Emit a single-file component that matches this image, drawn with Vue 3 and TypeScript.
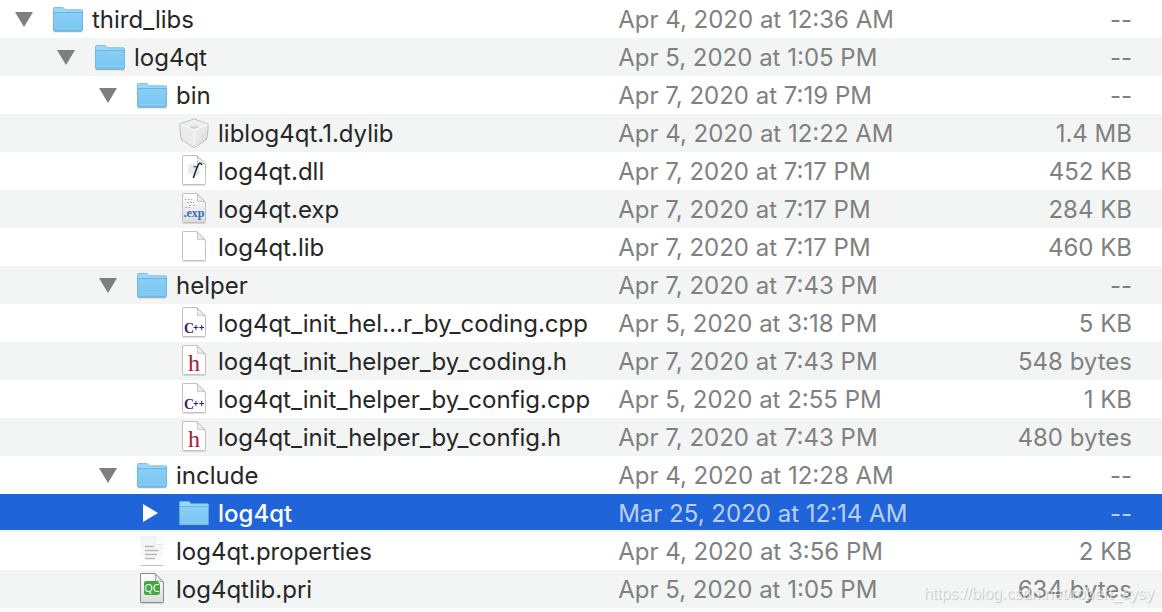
<script setup lang="ts">
import { ref } from 'vue'

type Kind = 'folder' | 'dylib' | 'dll' | 'exp' | 'blank' | 'cpp' | 'header' | 'text' | 'pri'

interface Entry {
  name: string
  kind: Kind
  depth: number
  modified: string
  size: string
  open?: boolean
}

const entries: Entry[] = [
  { name: 'third_libs', kind: 'folder', depth: 0, modified: 'Apr 4, 2020 at 12:36 AM', size: '--', open: true },
  { name: 'log4qt', kind: 'folder', depth: 1, modified: 'Apr 5, 2020 at 1:05 PM', size: '--', open: true },
  { name: 'bin', kind: 'folder', depth: 2, modified: 'Apr 7, 2020 at 7:19 PM', size: '--', open: true },
  { name: 'liblog4qt.1.dylib', kind: 'dylib', depth: 3, modified: 'Apr 4, 2020 at 12:22 AM', size: '1.4 MB' },
  { name: 'log4qt.dll', kind: 'dll', depth: 3, modified: 'Apr 7, 2020 at 7:17 PM', size: '452 KB' },
  { name: 'log4qt.exp', kind: 'exp', depth: 3, modified: 'Apr 7, 2020 at 7:17 PM', size: '284 KB' },
  { name: 'log4qt.lib', kind: 'blank', depth: 3, modified: 'Apr 7, 2020 at 7:17 PM', size: '460 KB' },
  { name: 'helper', kind: 'folder', depth: 2, modified: 'Apr 7, 2020 at 7:43 PM', size: '--', open: true },
  { name: 'log4qt_init_hel…r_by_coding.cpp', kind: 'cpp', depth: 3, modified: 'Apr 5, 2020 at 3:18 PM', size: '5 KB' },
  { name: 'log4qt_init_helper_by_coding.h', kind: 'header', depth: 3, modified: 'Apr 7, 2020 at 7:43 PM', size: '548 bytes' },
  { name: 'log4qt_init_helper_by_config.cpp', kind: 'cpp', depth: 3, modified: 'Apr 5, 2020 at 2:55 PM', size: '1 KB' },
  { name: 'log4qt_init_helper_by_config.h', kind: 'header', depth: 3, modified: 'Apr 7, 2020 at 7:43 PM', size: '480 bytes' },
  { name: 'include', kind: 'folder', depth: 2, modified: 'Apr 4, 2020 at 12:28 AM', size: '--', open: true },
  { name: 'log4qt', kind: 'folder', depth: 3, modified: 'Mar 25, 2020 at 12:14 AM', size: '--', open: false },
  { name: 'log4qt.properties', kind: 'text', depth: 2, modified: 'Apr 4, 2020 at 3:56 PM', size: '2 KB' },
  { name: 'log4qtlib.pri', kind: 'pri', depth: 2, modified: 'Apr 5, 2020 at 1:05 PM', size: '634 bytes' },
]

const selected = ref(13)
</script>

<template>
  <main class="browser">
    <svg class="defs" width="0" height="0" aria-hidden="true">
      <defs>
        <linearGradient id="folderFace" x1="0" y1="0" x2="0" y2="1">
          <stop offset="0" stop-color="#89cff6" />
          <stop offset="1" stop-color="#79c5f3" />
        </linearGradient>
        <linearGradient id="greyPage" x1="0" y1="0" x2="0" y2="1">
          <stop offset="0" stop-color="#ffffff" />
          <stop offset="1" stop-color="#dcdcdc" />
        </linearGradient>
        <linearGradient id="softPage" x1="0" y1="0" x2="0" y2="1">
          <stop offset="0" stop-color="#f1f1f1" />
          <stop offset="1" stop-color="#ffffff" />
        </linearGradient>
        <linearGradient id="brickRight" x1="0" y1="0" x2="1" y2="1">
          <stop offset="0" stop-color="#f6f6f6" />
          <stop offset="1" stop-color="#d6d6d6" />
        </linearGradient>
      </defs>
    </svg>

    <table class="files">
      <colgroup>
        <col class="col-name" />
        <col class="col-date" />
        <col class="col-size" />
      </colgroup>
      <tbody>
        <tr
          v-for="(entry, i) in entries"
          :key="i"
          :class="{ selected: i === selected }"
          @click="selected = i"
        >
          <td>
            <div class="name" :class="'depth-' + entry.depth">
              <button
                v-if="entry.kind === 'folder'"
                class="toggle"
                type="button"
                :aria-expanded="entry.open"
                :aria-label="'Toggle ' + entry.name"
              >
                <svg v-if="entry.open" width="18" height="18" viewBox="0 0 18 18">
                  <path d="M0 2H18L9 17Z" fill="currentColor" />
                </svg>
                <svg v-else width="18" height="18" viewBox="0 0 18 18">
                  <path d="M2 0L17 9L2 18Z" fill="currentColor" />
                </svg>
              </button>
              <span v-else class="toggle"></span>

              <svg class="icon" width="30" height="34" viewBox="0 0 30 34" aria-hidden="true">
                <template v-if="entry.kind === 'folder'">
                  <path d="M1 29.6H29" stroke="#000" stroke-opacity=".25" stroke-width="1.4" />
                  <path d="M.5 10V6.500Q.5 5.500 1.500 5.500H9.500Q10.300 5.500 10.900 6.200L12.300 7.800H28.500Q29.500 7.800 29.500 8.800V12H.5Z" fill="#9ad7f8" stroke="#6fb4de" stroke-width=".8" />
                  <path d="M.5 10.500H29.500V28Q29.500 29 28.500 29H1.500Q.5 29 .5 28Z" fill="url(#folderFace)" stroke="#5faad8" stroke-width=".8" />
                  <path d="M1 10.500H29" stroke="#67b5e2" stroke-width="1" />
                  <path d="M1 26.500H29" stroke="#8ed2f6" stroke-width=".8" />
                </template>

                <template v-else-if="entry.kind === 'dylib'">
                  <path d="M1 8L15 3L29 8Q29 21 27 24L15 31.500L3 24Q1 21 1 8Z" fill="#f3f3f3" stroke="#b4b4b4" stroke-width="1" stroke-linejoin="round" />
                  <path d="M15 14L28.500 8.500Q28 21 26.500 23.700L15 31Z" fill="url(#brickRight)" />
                  <path d="M1.500 8.500L15 14L15 31L3.500 23.700Q1.500 20 1.500 8.500Z" fill="#ebebeb" />
                  <path d="M2 8L15 3.500L28 8L15 13.500Z" fill="#f0f0f0" />
                  <path d="M1.500 8.500L15 14L28.500 8.500M15 14V27" fill="none" stroke="#fbfbfb" stroke-width="1" />
                  <path d="M11 9V11.500Q15 14 19 11.500V9Z" fill="#d0d0d0" />
                  <ellipse cx="15" cy="9" rx="4" ry="1.500" fill="#ececec" />
                </template>

                <g v-else-if="entry.kind === 'text'" transform="translate(0 -1)">
                  <path d="M3.500 3H18L26.500 11.500V32H3.500Z" fill="url(#softPage)" />
                  <path d="M18 3V11.500H26.500Z" fill="#fff" stroke="#e6e6e6" stroke-width=".8" />
                  <path d="M3.500 32.400H26.500" stroke="#bcbcbc" stroke-width="1" />
                  <path d="M8 13.500H17M8 17.500H21.500M8 21.500H20M8 25.500H18" stroke="#b9b9b9" stroke-width="1.400" />
                </g>

                <g v-else transform="translate(0 -2)">
                  <path d="M3.500 33H26.500" stroke="#000" stroke-opacity=".25" stroke-width="1" />
                  <path
                    d="M4 3.500H17.800L26.500 12.200V31.500Q26.500 32.500 25.500 32.500H4.500Q3.500 32.500 3.500 31.500V4Q3.500 3.500 4 3.500Z"
                    :fill="entry.kind === 'exp' || entry.kind === 'pri' ? 'url(#greyPage)' : '#fff'"
                    :stroke="entry.kind === 'pri' ? '#8b8b8b' : '#c2c2c2'"
                  />
                  <path
                    d="M17.800 3.500Q19.500 7 18.500 11.300Q22.800 10.500 26.500 12.200Z"
                    fill="#f2f2f2"
                    :stroke="entry.kind === 'pri' ? '#8b8b8b' : '#b9b9b9'"
                    stroke-width=".9"
                  />
                  <template v-if="entry.kind === 'dll'">
                    <path d="M9 13L13 12L20 13L21 21L18 24L9 21Z" fill="#e1ecf5" />
                    <path d="M23 13Q21.500 10.300 19.800 12Q18.800 13 17.800 16L14.300 26" fill="none" stroke="#202020" stroke-width="1.500" />
                    <path d="M14.500 14.800H19.300" stroke="#202020" stroke-width=".9" />
                  </template>
                  <template v-else-if="entry.kind === 'exp'">
                    <path d="M6 9.500H13M8 12.500H15M10 15.500H13M14 15.500H17M6 17.500H12" stroke="#b5b5b5" stroke-width="1" stroke-dasharray="2 1" />
                    <text x="15" y="27" class="tag-exp">.exp</text>
                  </template>
                  <template v-else-if="entry.kind === 'cpp'">
                    <text x="5" y="28.500" class="tag-c">C</text>
                    <path d="M14.500 23.500H19.300M16.900 21V26M20.300 23.500H25.100M22.700 21V26" stroke="#3c1a78" stroke-width="1" />
                  </template>
                  <text v-else-if="entry.kind === 'header'" x="15" y="29" class="tag-h">h</text>
                  <template v-else-if="entry.kind === 'pri'">
                    <path d="M7 13Q7 11 9 11H20L23 14V22Q23 25 20 25H9Q7 25 7 23Z" fill="#45a63f" />
                    <text x="15" y="22" class="tag-qc">QC</text>
                  </template>
                </g>
              </svg>
              <span class="label">{{ entry.name }}</span>
            </div>
          </td>
          <td class="date">{{ entry.modified }}</td>
          <td class="size">{{ entry.size }}</td>
        </tr>
      </tbody>
    </table>
    <span class="watermark">https://blog.csdn.net/robert_cysy</span>
  </main>
</template>

<style>
body {
  background: #fff;
}
</style>

<style scoped>
.browser {
  position: relative;
  padding-bottom: 4px;
  font-family: Inter, "Liberation Sans", sans-serif;
  font-size: 24px;
  line-height: 36px;
  color: #262626;
}

.defs {
  position: absolute;
}

.files {
  width: 100%;
  table-layout: fixed;
  border-collapse: collapse;
}

.col-name {
  width: 53.2%;
}

.col-size {
  width: 20%;
}

td {
  box-sizing: border-box;
  height: 38px;
  padding: 0;
  white-space: nowrap;
}

tr:nth-child(even) {
  background: #f3f5f5;
}

tr.selected {
  background: linear-gradient(#2064da 36px, #f3f5f5 36px);
  color: #fff;
}

.name {
  display: flex;
  align-items: center;
  height: 38px;
  padding-left: 15px;
}

.depth-1 {
  padding-left: 57px;
}

.depth-2 {
  padding-left: 99px;
}

.depth-3 {
  padding-left: 141px;
}

.toggle {
  flex: none;
  display: flex;
  width: 18px;
  height: 18px;
  margin-right: 20px;
  padding: 0;
  border: 0;
  background: none;
  color: #7f7f7f;
}

.icon {
  flex: none;
  margin-right: 9px;
}

.label {
  padding-top: 2px;
}

.date,
.size {
  padding-top: 2px;
  color: #808080;
}

.size {
  padding-right: 30px;
  text-align: right;
}

.selected .toggle {
  color: #fff;
}

.selected .date,
.selected .size {
  color: #bcd0f4;
}

.selected .label {
  font-weight: 500;
}

.tag-exp,
.tag-c,
.tag-h {
  font-family: "Liberation Serif", serif;
}

.tag-exp {
  font-size: 12px;
  font-weight: 700;
  text-anchor: middle;
  fill: #2c6fc4;
}

.tag-c {
  font-size: 14px;
  font-weight: 700;
  fill: #3c1a78;
}

.tag-h {
  font-size: 24px;
  text-anchor: middle;
  fill: #a3202c;
}

.tag-qc {
  font-family: "Open Sans", sans-serif;
  font-size: 11px;
  text-anchor: middle;
  fill: #fff;
}

.watermark {
  position: absolute;
  right: 8px;
  bottom: 8px;
  font-family: "Liberation Sans", sans-serif;
  font-size: 16px;
  line-height: 20px;
  color: rgba(255, 255, 255, 0.65);
  text-shadow: 1px 1px 1px rgba(0, 0, 0, 0.2);
  pointer-events: none;
}
</style>
